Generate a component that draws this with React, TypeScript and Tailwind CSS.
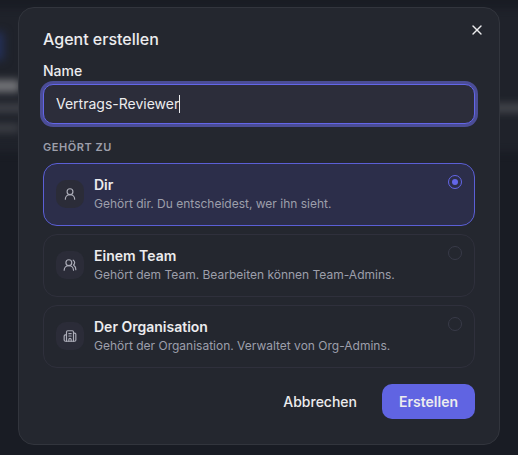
import React, { useState } from 'react';
import { Building2, UserRound, UsersRound, X, type LucideIcon } from 'lucide-react';

interface OwnerOption {
    value: string;
    title: string;
    description: string;
    icon: LucideIcon;
}

const OWNER_OPTIONS: OwnerOption[] = [
    {
        value: 'self',
        title: 'Dir',
        description: 'Gehört dir. Du entscheidest, wer ihn sieht.',
        icon: UserRound,
    },
    {
        value: 'team',
        title: 'Einem Team',
        description: 'Gehört dem Team. Bearbeiten können Team-Admins.',
        icon: UsersRound,
    },
    {
        value: 'org',
        title: 'Der Organisation',
        description: 'Gehört der Organisation. Verwaltet von Org-Admins.',
        icon: Building2,
    },
];

// Dimmed and blurred page content behind the dialog
const Backdrop: React.FC = () => (
    <div aria-hidden="true" className="absolute inset-0 overflow-hidden bg-[#191c24]">
        <div className="absolute -inset-x-4 top-2 h-36 bg-[#1f222a] blur-[4px]" />
        <div className="absolute -left-6 top-8 h-7 w-7 bg-[#232f56] blur-[4px]" />
        <div className="absolute -left-4 top-20 h-3 w-9 bg-[#77787c] blur-[4px]" />
        <div className="absolute -left-4 top-26 h-2 w-16 bg-[#44464d] blur-[4px]" />
        <div className="absolute -left-4 top-31 h-2 w-9 bg-[#404249] blur-[4px]" />
        <div className="absolute -right-4 top-26 h-2 w-16 bg-[#4a4c52] blur-[4px]" />
    </div>
);

const App: React.FC = () => {
    const [name, setName] = useState('Vertrags-Reviewer');
    const [owner, setOwner] = useState('self');

    return (
        <div className="relative min-h-screen bg-[#191c24] px-[18px] pt-[7px] pb-2.5 font-['Inter','Liberation_Sans',sans-serif] text-[#ececee]">
            <Backdrop />
            <form
                role="dialog"
                aria-labelledby="dialog-title"
                onSubmit={(e) => e.preventDefault()}
                className="relative mx-auto w-full max-w-lg rounded-2xl border border-[#32353d] bg-[#24272f] px-6 pt-[23px] pb-[25px]"
            >
                <button
                    type="button"
                    aria-label="Schließen"
                    className="absolute top-3.5 right-3.5 flex size-4 items-center justify-center"
                >
                    <X className="size-4" strokeWidth={2} />
                </button>

                <h2 id="dialog-title" className="text-base leading-4 font-medium">
                    Agent erstellen
                </h2>

                <label htmlFor="agent-name" className="mt-3.5 block text-sm leading-5 font-medium">
                    Name
                </label>
                <div className="mt-[3px] flex h-10 items-center rounded-[10px] border border-[#6366e8] bg-[#2c2d3a] px-3 ring-3 ring-[#4b4d96]">
                    <input
                        id="agent-name"
                        type="text"
                        autoComplete="off"
                        spellCheck={false}
                        value={name}
                        onChange={(e) => setName(e.target.value)}
                        className="field-sizing-content max-w-full text-sm caret-transparent outline-none"
                    />
                    {/* Text cursor, follows the input's content width */}
                    <span className="h-[18px] w-px shrink-0 bg-[#ececee]" />
                </div>

                <fieldset className="mt-[15px]">
                    <legend className="text-[11px] leading-4 font-semibold tracking-wider text-[#9d9fab] uppercase">
                        Gehört zu
                    </legend>
                    <div className="mt-2 flex flex-col gap-2">
                        {OWNER_OPTIONS.map(({ value, title, description, icon: Icon }) => (
                            <label
                                key={value}
                                className="flex items-center gap-2.5 rounded-[14px] border border-[#2f303c] px-3 pt-[11px] pb-3 has-checked:border-[#5b5fd6] has-checked:bg-[#2c2e4a]"
                            >
                                <span className="flex size-7 shrink-0 items-center justify-center rounded-[10px] bg-[#2b2c38] text-[#acadb8]">
                                    <Icon className="size-3.5" strokeWidth={2} />
                                </span>
                                <span className="min-w-0 flex-1">
                                    <span className="block text-sm leading-5 font-semibold">{title}</span>
                                    <span className="block text-xs leading-[18px] text-[#9d9fab]">{description}</span>
                                </span>
                                <input
                                    type="radio"
                                    name="owner"
                                    value={value}
                                    checked={owner === value}
                                    onChange={() => setOwner(value)}
                                    className="grid size-3.5 appearance-none place-items-center self-start rounded-full border border-[#383a48] before:size-1.5 before:rounded-full checked:border-[#6366e8] checked:before:bg-[#6366e8]"
                                />
                            </label>
                        ))}
                    </div>
                </fieldset>

                <div className="mt-4 flex justify-end gap-2">
                    <button type="button" className="h-[35px] rounded-[10px] px-[17px] text-sm font-medium">
                        Abbrechen
                    </button>
                    <button type="submit" className="h-[35px] rounded-[10px] bg-[#6064e2] px-[17px] text-sm font-semibold">
                        Erstellen
                    </button>
                </div>
            </form>
        </div>
    );
};

export default App;
